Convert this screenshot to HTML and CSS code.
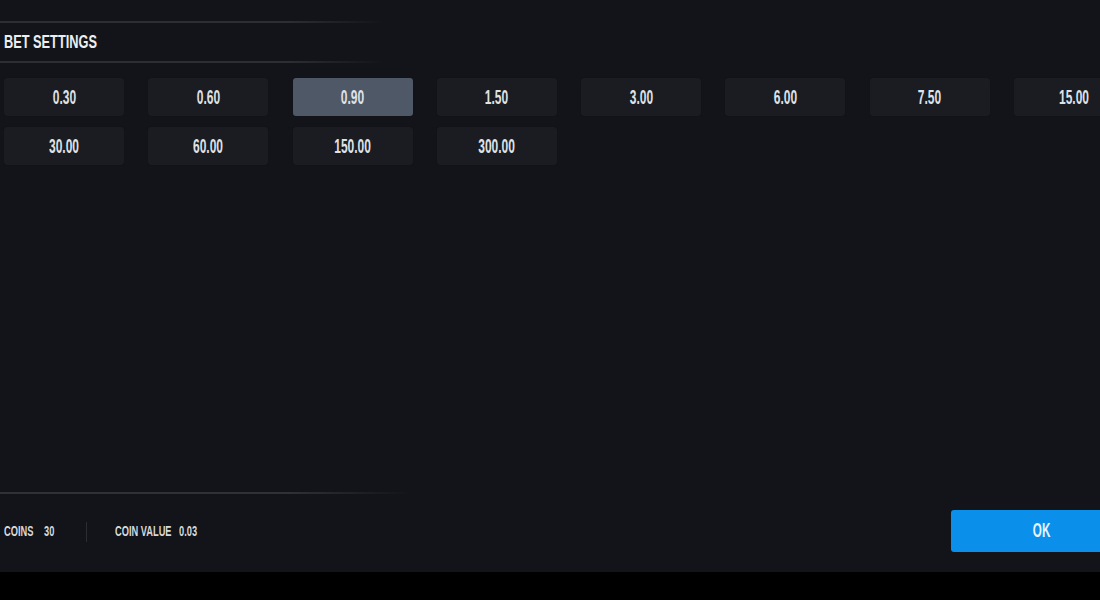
FILE: index.html
```html
<!DOCTYPE html>
<html>
<head>
<meta charset="utf-8">
<link rel="stylesheet" href="styles.css">
</head>
<body>
<div class="panel">
  <div class="rule rule-top"></div>
  <div class="title"><span class="sq sq-title">BET SETTINGS</span></div>
  <div class="rule rule-top"></div>
  <div class="grid">
    <div class="bet"><span class="sq sq-num">0.30</span></div>
    <div class="bet"><span class="sq sq-num">0.60</span></div>
    <div class="bet selected"><span class="sq sq-num">0.90</span></div>
    <div class="bet"><span class="sq sq-num">1.50</span></div>
    <div class="bet"><span class="sq sq-num">3.00</span></div>
    <div class="bet"><span class="sq sq-num">6.00</span></div>
    <div class="bet"><span class="sq sq-num">7.50</span></div>
    <div class="bet"><span class="sq sq-num">15.00</span></div>
    <div class="bet"><span class="sq sq-num">30.00</span></div>
    <div class="bet"><span class="sq sq-num">60.00</span></div>
    <div class="bet"><span class="sq sq-num">150.00</span></div>
    <div class="bet"><span class="sq sq-num">300.00</span></div>
  </div>
  <div class="spacer"></div>
  <div class="rule rule-bottom"></div>
  <div class="footer">
    <div class="stats">
      <div class="stat w-coins"><span class="sq sq-small">COINS</span></div>
      <div class="stat w-coins-val"><span class="sq sq-small">30</span></div>
      <div class="sep"></div>
      <div class="stat w-cv"><span class="sq sq-small">COIN VALUE</span></div>
      <div class="stat"><span class="sq sq-small">0.03</span></div>
    </div>
    <div class="ok"><span class="sq sq-ok">OK</span></div>
  </div>
</div>
<div class="bottom-bar"></div>
</body>
</html>
```

FILE: styles.css
```css
html, body {
  margin: 0;
  padding: 0;
}
body {
  width: 1100px;
  height: 600px;
  overflow: hidden;
  background: #121419;
  font-family: "Liberation Sans", Arial, sans-serif;
  color: #e4e6ea;
}
.panel {
  height: 572px;
  display: flex;
  flex-direction: column;
  overflow: hidden;
}
.rule {
  height: 2px;
  flex: none;
}
.rule-top {
  width: 385px;
  background: linear-gradient(to right, #2b2e34 0%, #2b2e34 75%, rgba(43,46,52,0));
}
.rule-top:first-child {
  margin-top: 21px;
}
.rule-bottom {
  width: 412px;
  background: linear-gradient(to right, #2e3137 0%, #2e3137 70%, rgba(46,49,55,0));
}
.sq {
  display: inline-block;
  white-space: nowrap;
  font-weight: 700;
}
.title {
  height: 38px;
  display: flex;
  align-items: center;
  padding-left: 4px;
}
.sq-title {
  font-size: 18.5px;
  transform: scaleX(0.69);
  transform-origin: left center;
  color: #eceef1;
}
.grid {
  margin-top: 15px;
  padding-left: 4px;
  display: grid;
  grid-template-columns: repeat(8, 120px);
  column-gap: 24.3px;
  row-gap: 11px;
  width: 1200px;
}
.bet {
  height: 38px;
  background: #1a1c21;
  border-radius: 3px;
  display: flex;
  align-items: center;
  justify-content: center;
  box-shadow: 0 0 1px rgba(0,0,0,0.4);
}
.bet.selected {
  background: #4f5867;
}
.sq-num {
  font-size: 20px;
  transform: scaleX(0.6);
  color: #dfe1e5;
  line-height: 1;
}
.spacer {
  flex: 1;
}
.footer {
  height: 74px;
  padding-bottom: 4px;
  display: flex;
  align-items: center;
  justify-content: space-between;
}
.stats {
  display: flex;
  align-items: center;
  padding-left: 4px;
  margin-top: 1px;
}
.stat {
  display: flex;
  align-items: center;
}
.w-coins { width: 40px; }
.w-coins-val { width: 42px; }
.w-cv { width: 64px; }
.sep {
  width: 1px;
  height: 20px;
  background: #2a2d33;
  margin-right: 28px;
}
.sq-small {
  font-size: 14.5px;
  transform: scaleX(0.64);
  transform-origin: left center;
  color: #d6d8dc;
  line-height: 1;
}
.ok {
  width: 181px;
  height: 42px;
  margin-right: -32px;
  background: #0a8fea;
  border-radius: 3px 0 0 3px;
  display: flex;
  align-items: center;
  justify-content: center;
}
.sq-ok {
  font-size: 19.5px;
  transform: scaleX(0.6);
  color: #e8f3fc;
  line-height: 1;
}
.bottom-bar {
  height: 28px;
  background: #000;
}
```
